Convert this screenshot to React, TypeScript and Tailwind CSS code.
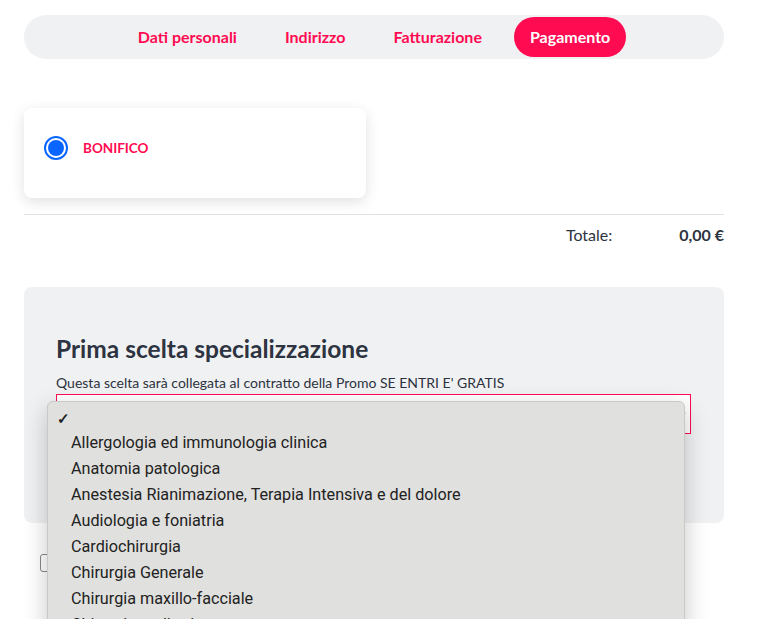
const tabs = ["Dati personali", "Indirizzo", "Fatturazione", "Pagamento"];

const options = [
  "Allergologia ed immunologia clinica",
  "Anatomia patologica",
  "Anestesia Rianimazione, Terapia Intensiva e del dolore",
  "Audiologia e foniatria",
  "Cardiochirurgia",
  "Chirurgia Generale",
  "Chirurgia maxillo-facciale",
  "Chirurgia pediatrica",
];

export default function App() {
  return (
    <div
      className="h-[619px] w-[758px] overflow-hidden bg-white"
      style={{ fontFamily: "Lato, 'Noto Sans', sans-serif" }}
    >
      <div className="w-[700px] ml-6 pt-[15px]">
        {/* steps */}
        <div className="flex h-11 items-center justify-center gap-4 rounded-full bg-[#f0f1f3]">
          {tabs.map((t) =>
            t === "Pagamento" ? (
              <span
                key={t}
                className="flex h-10 items-center rounded-full bg-[#ff0b52] px-4 text-[16px] font-bold text-white"
              >
                {t}
              </span>
            ) : (
              <span key={t} className="px-4 text-[16px] font-bold text-[#ff0b52]">
                {t}
              </span>
            )
          )}
        </div>

        {/* payment method */}
        <div className="mt-[49px] h-[90px] w-[342px] rounded-lg bg-white pt-7 pl-5 shadow-[0_4px_14px_rgba(0,0,0,0.12)]">
          <div className="flex items-center gap-[15px]">
            <span className="flex h-6 w-6 items-center justify-center rounded-full border-2 border-[#0a66ff] bg-white">
              <span className="h-4 w-4 rounded-full bg-[#0a66ff]" />
            </span>
            <span className="text-[13.5px] font-bold text-[#ff0b52]">BONIFICO</span>
          </div>
        </div>

        <div className="mt-4 border-t border-[#e2e2e8]" />
        <div className="flex justify-end pt-2 text-[16px] text-[#2d3340]">
          <span className="mr-[67px]">Totale:</span>
          <span className="font-bold">0,00 €</span>
        </div>

        {/* specializzazione */}
        <div className="mt-[40px] h-[236px] rounded-lg bg-[#f0f1f3] px-8 pt-[46px]">
          <h2 className="text-[24.5px] font-bold leading-8 text-[#2d3340]">
            Prima scelta specializzazione
          </h2>
          <p className="mt-[9px] text-[14px] leading-[18px] text-[#2d3340]">
            Questa scelta sarà collegata al contratto della Promo SE ENTRI E' GRATIS
          </p>
          <div className="relative mt-[2px]">
            <div className="flex h-10 w-[635px] items-center justify-end border border-[#ff0b52] bg-white pr-1">
              <svg width="8" height="8" viewBox="0 0 8 8" className="text-[#333]">
                <path d="M1 2.5 4 5.5 7 2.5" fill="none" stroke="currentColor" strokeWidth="1.6" />
              </svg>
            </div>

            {/* open native-like dropdown */}
            <div
              className="absolute left-[-9px] top-[7px] z-10 h-[260px] w-[638px] rounded-md border border-[#c9c9c8] bg-[#e0e0de] pt-[6px] text-[16.2px] text-[#222] shadow-[0_8px_24px_rgba(0,0,0,0.22)]"
              style={{ fontFamily: "Roboto, 'Liberation Sans', sans-serif" }}
            >
              <div className="flex h-[22px] items-center pl-[9px] text-[15px] font-bold">✓</div>
              {options.map((o) => (
                <div key={o} className="flex h-[26px] items-center pl-[23px]">
                  {o}
                </div>
              ))}
            </div>
          </div>
        </div>

        <div className="mt-[31px] flex items-center">
          <span className="ml-4 h-[18px] w-[18px] rounded-[3px] border border-[#888] bg-white" />
        </div>
      </div>
    </div>
  );
}
